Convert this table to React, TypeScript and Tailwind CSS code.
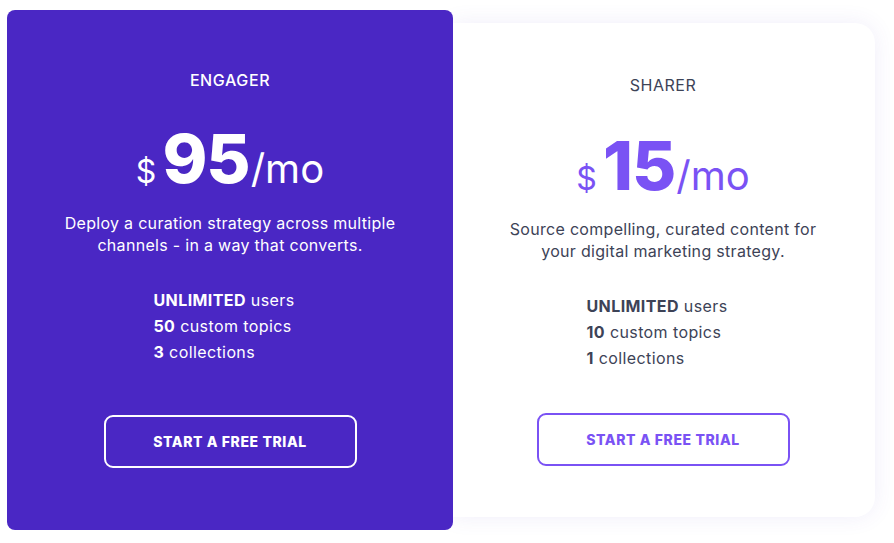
const font = { fontFamily: "Inter, 'Noto Sans', sans-serif" };

type Plan = {
  name: string;
  price: string;
  desc: string[];
  topics: string;
  collections: string;
};

const engager: Plan = {
  name: "ENGAGER",
  price: "95",
  desc: ["Deploy a curation strategy across multiple", "channels - in a way that converts."],
  topics: "50",
  collections: "3",
};

const sharer: Plan = {
  name: "SHARER",
  price: "15",
  desc: ["Source compelling, curated content for", "your digital marketing strategy."],
  topics: "10",
  collections: "1",
};

const Features = ({ plan, bold }: { plan: Plan; bold: string }) => (
  <div className="flex justify-center">
    <ul className="text-left text-[16px] leading-[26px] tracking-[0.4px] pr-[12px]">
      <li>
        <span className={`font-bold ${bold}`}>UNLIMITED</span> users
      </li>
      <li>
        <span className={`font-bold ${bold}`}>{plan.topics}</span> custom topics
      </li>
      <li>
        <span className={`font-bold ${bold}`}>{plan.collections}</span> collections
      </li>
    </ul>
  </div>
);

export default function App() {
  return (
    <div className="w-[894px] h-[543px] bg-white overflow-hidden" style={font}>
      <div className="flex items-center h-[540px] pl-[7px]">
        {/* featured card */}
        <div className="relative z-10 w-[446px] h-[520px] rounded-[8px] bg-[#4a27c4] text-white text-center flex flex-col items-center pt-[58px]">
          <h3 className="text-[16px] leading-[24px] font-medium tracking-[0.6px]">{engager.name}</h3>
          <div className="mt-[32px] flex items-baseline justify-center h-[68px] leading-none">
            <span className="text-[32px] mr-[6px]">$</span>
            <span className="text-[68px] font-extrabold tracking-[-1px]">{engager.price}</span>
            <span className="text-[40px] ml-[1px]">/mo</span>
          </div>
          <p className="mt-[20px] text-[16px] leading-[22px] tracking-[0.3px]">
            {engager.desc[0]}
            <br />
            {engager.desc[1]}
          </p>
          <div className="mt-[31px]">
            <Features plan={engager} bold="text-white" />
          </div>
          <button className="mt-[50px] w-[253px] h-[53px] rounded-[9px] border-2 border-white text-[14px] font-extrabold tracking-[0.6px]">
            START A FREE TRIAL
          </button>
        </div>

        {/* basic card */}
        <div className="-ml-[2px] w-[424px] h-[494px] rounded-r-[20px] bg-white shadow-[0_0_22px_rgba(90,70,200,0.09)] text-[#3d4357] text-center flex flex-col items-center pt-[50px]">
          <h3 className="text-[16px] leading-[24px] tracking-[0.5px]">{sharer.name}</h3>
          <div className="mt-[34px] flex items-baseline justify-center h-[68px] leading-none text-[#7a52f4]">
            <span className="text-[32px] mr-[6px]">$</span>
            <span className="text-[68px] font-extrabold tracking-[-1px]">{sharer.price}</span>
            <span className="text-[40px] ml-[1px]">/mo</span>
          </div>
          <p className="mt-[19px] text-[16px] leading-[22px] tracking-[0.3px]">
            {sharer.desc[0]}
            <br />
            {sharer.desc[1]}
          </p>
          <div className="mt-[31px]">
            <Features plan={sharer} bold="text-[#3d4357]" />
          </div>
          <button className="mt-[42px] w-[253px] h-[53px] rounded-[9px] border-2 border-[#7a52f4] text-[#7a52f4] text-[14px] font-extrabold tracking-[0.6px]">
            START A FREE TRIAL
          </button>
        </div>
      </div>
    </div>
  );
}
